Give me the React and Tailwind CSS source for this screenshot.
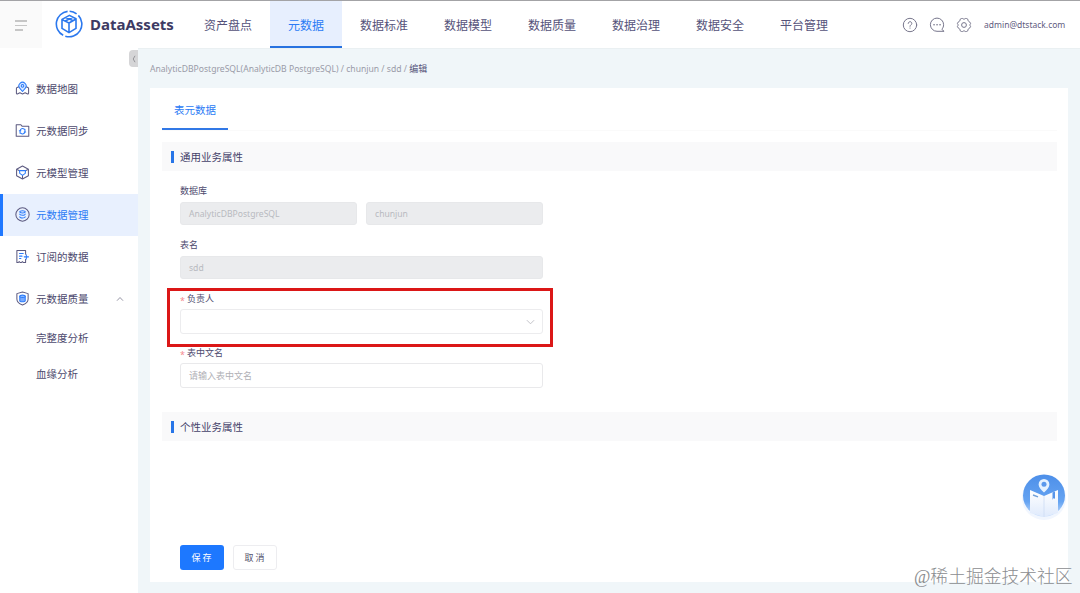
const navItems = ['资产盘点', '元数据', '数据标准', '数据模型', '数据质量', '数据治理', '数据安全', '平台管理']

const sideItems = [
  { label: '数据地图', icon: MapIcon },
  { label: '元数据同步', icon: SyncIcon },
  { label: '元模型管理', icon: ModelIcon },
  { label: '元数据管理', icon: MetaIcon, active: true },
  { label: '订阅的数据', icon: SubscribeIcon },
  { label: '元数据质量', icon: QualityIcon, open: true },
]

const subItems = ['完整度分析', '血缘分析']

function Svg({ children }) {
  return (
    <svg
      viewBox="0 0 16 16"
      fill="none"
      stroke="#5c5a80"
      strokeWidth="1.1"
      strokeLinecap="round"
      strokeLinejoin="round"
      className="w-[15px] h-[15px] shrink-0 -mt-px"
    >
      {children}
    </svg>
  )
}

function MapIcon() {
  return (
    <Svg>
      <path d="M4.2 6.2 2.2 7a.9.9 0 0 0-.7.9v5.2c0 .6.5.9 1 .7l2.7-1.2L8 13.8l2.8-1.2 2.7 1.2c.5.2 1-.1 1-.7V7.9a.9.9 0 0 0-.7-.9l-2-.8" />
      <path d="M8 11.2 5.2 7.8a3.8 3.8 0 1 1 5.6 0Z" stroke="#2b7bfa" fill="#dbe9ff" />
      <circle cx="8" cy="5.2" r="1.4" stroke="#2b7bfa" />
    </Svg>
  )
}

function SyncIcon() {
  return (
    <Svg>
      <path d="M1.3 1.9h5l1.2 1.5h7.2v10.8H1.3Z" />
      <path d="M5.4 10.8V8.2a2.6 2.6 0 0 1 4.4-1.6M10.6 6.6v2.8a2.6 2.6 0 0 1-4.4 1.5M4.6 8.2h1.6M9.8 9.6h1.6" stroke="#2b7bfa" />
    </Svg>
  )
}

function ModelIcon() {
  return (
    <Svg>
      <path d="m8 1.1 6.3 3.4v7L8 14.9l-6.3-3.4v-7ZM8 11.2v3.4M2 4.7l2.4 1.2M14 4.7l-2.4 1.2" />
      <path d="M4.8 6h6.4L10.9 9 8 11.1 5.1 9Z" stroke="#2b7bfa" />
    </Svg>
  )
}

function MetaIcon() {
  return (
    <Svg>
      <circle cx="8" cy="8" r="7.1" />
      <ellipse cx="8" cy="5.1" rx="2.9" ry="1.2" stroke="#2b7bfa" />
      <path d="M5.1 7.5c0 1.7 5.8 1.7 5.8 0M5.1 10.3c0 1.8 5.8 1.8 5.8 0" stroke="#2b7bfa" />
    </Svg>
  )
}

function SubscribeIcon() {
  return (
    <Svg>
      <path d="M11.3 5.6V1.5H2v12.8h1.6l.9-.8.9.8H7l.9-.8.9.8h2.5V11" />
      <path d="M4.8 4.8h4M4.8 7.6h2.7M4.8 10.2h1.5M9.8 8.4h4.6M12.1 6.2v4.4" stroke="#2b7bfa" />
    </Svg>
  )
}

function QualityIcon() {
  return (
    <Svg>
      <path d="M8 1 14 2.8v5.6c0 3-2.5 5.2-6 6.5-3.5-1.3-6-3.5-6-6.5V2.8Z" />
      <path d="M5.1 5.6v4.8c0 1.5 5.8 1.5 5.8 0V5.6" stroke="#2b7bfa" fill="#77aaff" />
      <ellipse cx="8" cy="5.6" rx="2.9" ry="1.2" stroke="#2b7bfa" fill="#a9caff" />
    </Svg>
  )
}

function Logo() {
  return (
    <svg viewBox="0 0 28 28" fill="none" stroke="#2b78ee" strokeWidth="1.6" strokeLinejoin="round" className="w-7 h-7 shrink-0 -mt-px">
      <path d="M12.6 1.4A12.7 12.7 0 0 0 8.2 25.3M10.3 26.2A12.7 12.7 0 0 0 23.4 5.4M21.6 3.8A12.7 12.7 0 0 0 14.6 1.3" />
      <path d="M14.4 5.4 21 8.8v9.6l-7 4.2-7-4.2V9.4ZM7 9.6l7 3.4 7-4M14 13v9.4M10.7 7.6l7 3M10.2 11l7.6-3.8" />
    </svg>
  )
}

function Header() {
  return (
    <header className="h-12 flex bg-white border-t border-[#a3a3a6] shrink-0">
      <div className="w-[42px] h-[49px] bg-[#fafafa] shrink-0 flex flex-col justify-center pl-[15px] gap-[3px]">
        <span className="w-3 h-[1.5px] bg-[#c6c6c6]" />
        <span className="w-3 h-[1.5px] bg-[#c6c6c6]" />
        <span className="w-[8px] h-[1.5px] bg-[#c6c6c6]" />
      </div>
      <div className="w-[144px] pl-[13px] flex items-center gap-[7px] shrink-0">
        <Logo />
        <span className="text-[15px] leading-none font-bold text-[#3d3a63] whitespace-nowrap">DataAssets</span>
      </div>
      <nav className="flex">
        {navItems.map((label) => (
          <div
            key={label}
            className={`px-[18px] flex items-center text-[12px] whitespace-nowrap border-b-2 pt-[5px] ${
              label === '元数据' ? 'bg-[#e7effe] text-[#2b7bf5] border-[#2872e0]' : 'text-[#55527a] border-transparent'
            }`}
          >
            {label}
          </div>
        ))}
      </nav>
      <div className="ml-auto pr-[15px] flex items-center text-[#77768c]">
        <svg viewBox="0 0 16 16" fill="none" stroke="currentColor" strokeLinecap="round" className="w-4 h-4 mr-[11px]">
          <circle cx="8" cy="8" r="6.7" />
          <path d="M6.2 6.4a1.8 1.8 0 1 1 2.7 1.6c-.6.3-.9.6-.9 1.3M8 11v.2" />
        </svg>
        <svg viewBox="0 0 16 16" fill="none" stroke="currentColor" strokeLinecap="round" strokeLinejoin="round" className="w-4 h-4 mr-[11px]">
          <path d="M14.7 14.3H8a6.6 6.6 0 1 1 6.6-6.6c0 1.7-.6 3.2-1.5 4.4Z" />
          <path d="M5 7.7h.1M8 7.7h.1M11 7.7h.1" strokeWidth="1.6" />
        </svg>
        <svg viewBox="0 0 16 16" fill="none" stroke="currentColor" strokeLinejoin="round" className="w-4 h-4 mr-3">
          <path d="M5.5 1.5h1.1c.7.8 2.1.8 2.8 0h1.1l1.4.8c-.1 1.3.5 2.2 1.7 2.5l1 1.8c-.9.9-.9 1.9 0 2.8l-1 1.8c-1.2.3-1.8 1.2-1.7 2.5l-1.4.8H9.4c-.7-.8-2.1-.8-2.8 0H5.5l-1.4-.8c.1-1.3-.5-2.2-1.7-2.5l-1-1.8c.9-.9.9-1.9 0-2.8l1-1.8c1.2-.3 1.8-1.2 1.7-2.5Z" />
          <circle cx="8" cy="8" r="2.4" />
        </svg>
        <span className="w-[81px] pt-[2px] text-[8.5px] whitespace-nowrap text-[#5f5c80]">admin@dtstack.com</span>
      </div>
    </header>
  )
}

function Sidebar() {
  return (
    <aside className="w-[138px] bg-white pt-5 shrink-0 relative">
      <div className="absolute right-0 top-[2px] w-[9px] h-[17px] rounded-l-sm bg-[#d5d5d7] flex items-center justify-center">
        <svg viewBox="0 0 4 8" fill="none" stroke="#85858c" strokeWidth=".8" className="w-1 h-2">
          <path d="M3 .8 1.2 4 3 7.2" />
        </svg>
      </div>
      {sideItems.map(({ label, icon: ItemIcon, active, open }) => (
        <div
          key={label}
          className={`h-[42px] flex items-center gap-[6px] text-[10.5px] border-l-[3px] pl-3 ${
            active ? 'bg-[#e8f0fe] text-[#2b7bf5] border-[#1f78ff]' : 'text-[#4d4a6e] border-transparent'
          }`}
        >
          <ItemIcon />
          <span className="whitespace-nowrap pt-[2px]">{label}</span>
          {open && (
            <svg viewBox="0 0 8 6" fill="none" stroke="#8b8a9c" strokeWidth=".9" className="w-2 h-[6px] ml-auto mr-[14px]">
              <path d="m1 4.7 3-3.2 3 3.2" />
            </svg>
          )}
        </div>
      ))}
      {subItems.map((label) => (
        <div key={label} className="h-9 pl-9 pt-[2px] flex items-center text-[10.5px] text-[#4d4a6e]">
          {label}
        </div>
      ))}
    </aside>
  )
}

function SectionTitle({ children }) {
  return (
    <div className="h-[29px] bg-[#f9f9fa] flex items-center pl-[9px] text-[10.5px] text-[#45426a]">
      <span className="w-[3px] h-3 bg-[#2876e8] mr-[6px]" />
      <span className="pt-[2px]">{children}</span>
    </div>
  )
}

function Field({ label, required, children }) {
  return (
    <div className="h-[54px]">
      <div className="h-[18px] flex items-center text-[9px] text-[#4d4a6e]">
        {required && <span className="w-[7px] text-[#f58a90] leading-none pt-[2px]">*</span>}
        {label}
      </div>
      <div className="flex gap-[9px] pt-px">{children}</div>
    </div>
  )
}

function Disabled({ children }) {
  return (
    <div className="flex-1 h-[23px] mt-px rounded-[3px] bg-[#ebecee] border border-[#e7e8ea] px-2 pt-[2px] flex items-center text-[8.6px] text-[#b8bac0]">
      {children}
    </div>
  )
}

function Assistant() {
  return (
    <svg viewBox="0 0 50 50" className="absolute left-[1019px] top-[471px] w-[50px] h-[50px]">
      <defs>
        <linearGradient id="ball" x1="0" y1="0" x2="0" y2="1">
          <stop offset="0" stopColor="#4d8fe9" />
          <stop offset=".65" stopColor="#66a4f2" />
          <stop offset="1" stopColor="#c7defc" />
        </linearGradient>
        <linearGradient id="page" x1="0" y1="0" x2="0" y2="1">
          <stop offset="0" stopColor="#ffffff" />
          <stop offset="1" stopColor="#dfeafc" />
        </linearGradient>
      </defs>
      <circle cx="25" cy="27" r="22" fill="#f1f6fe" />
      <circle cx="25" cy="24.5" r="21" fill="url(#ball)" />
      <path d="M11 19 25 25l14-6V42l-14 4-14-4Z" fill="url(#page)" />
      <path d="M25 25v21" stroke="#cddcf4" strokeWidth=".8" />
      <path d="m14 24 5 1.9" stroke="#719fd8" strokeWidth="1.4" />
      <path d="M33.5 21.4 36 20.4v7.6l-1.2-1-1.3 1.8Z" fill="#5795ea" />
      <path d="M25 21.4c-3-3-5.4-5-5.4-8a5.4 5.4 0 0 1 10.8 0c0 3-2.4 5-5.4 8Z" fill="#e5f2ff" />
      <circle cx="25" cy="13.3" r="2.5" fill="#5b99ec" />
    </svg>
  )
}

export default function App() {
  return (
    <div className="relative w-[1080px] h-[593px] overflow-hidden flex flex-col bg-[#f0f6f9] font-['Noto_Sans','Noto_Sans_CJK_SC',sans-serif]">
      <Header />
      <div className="flex flex-1 min-h-0">
        <Sidebar />
        <main className="flex-1 min-w-0 border-t border-[#eaf0f2] pl-3 pr-3 flex flex-col">
          <div className="h-[39px] flex items-center text-[8.6px] text-[#9a9ba8] whitespace-pre">
            <span className="pt-[2px]">AnalyticDBPostgreSQL(AnalyticDB PostgreSQL) / chunjun / sdd / </span>
            <span className="text-[9px] text-[#55527a]">编辑</span>
          </div>
          <section className="h-[494px] bg-white pl-3 pr-[11px]">
            <div className="h-[43px] border-b border-[#fafafa]">
              <div className="w-[66px] h-[42px] border-b-2 border-[#3178e6] flex items-center justify-center text-[10.5px] text-[#2b7bf5] pt-[5px]">
                表元数据
              </div>
            </div>
            <div className="pt-[11px]">
              <SectionTitle>通用业务属性</SectionTitle>
            </div>
            <div className="w-[381px] pl-[18px] pt-[11px] h-[241px]">
              <Field label="数据库">
                <Disabled>AnalyticDBPostgreSQL</Disabled>
                <Disabled>chunjun</Disabled>
              </Field>
              <Field label="表名">
                <Disabled>sdd</Disabled>
              </Field>
              <Field label="负责人" required>
                <div className="flex-1 h-[25px] rounded-[3px] border border-[#ececee] pl-2 pr-[7px] flex items-center justify-end">
                  <svg viewBox="0 0 10 6" fill="none" stroke="#b5b5bc" strokeWidth=".9" className="w-[9px] h-[6px]">
                    <path d="m1 1 4 4 4-4" />
                  </svg>
                </div>
              </Field>
              <Field label="表中文名" required>
                <div className="flex-1 h-[25px] rounded-[3px] border border-[#e9e9eb] px-2 flex items-center text-[9px] text-[#b0b0b6]">
                  请输入表中文名
                </div>
              </Field>
            </div>
            <SectionTitle>个性业务属性</SectionTitle>
            <div className="flex gap-[9px] pl-[18px] pt-[104px] text-[9px]">
              <button className="w-11 h-[25px] rounded-[3px] bg-[#1d78ff] text-white tracking-[2px] pl-px">保存</button>
              <button className="w-11 h-[25px] rounded-[3px] bg-white border border-[#ededf0] text-[#55536c] tracking-[2px] pl-px">取消</button>
            </div>
          </section>
        </main>
      </div>
      <div className="absolute left-[167px] top-[288px] w-[386px] h-[59px] border-[3px] border-[#db1717]" />
      <Assistant />
      <div className="absolute left-[914px] top-[565px] text-[17.8px] leading-6 font-light text-[#8b8d90] whitespace-nowrap font-['Liberation_Serif','Noto_Sans_CJK_SC',serif]">
        @稀土掘金技术社区
      </div>
    </div>
  )
}
